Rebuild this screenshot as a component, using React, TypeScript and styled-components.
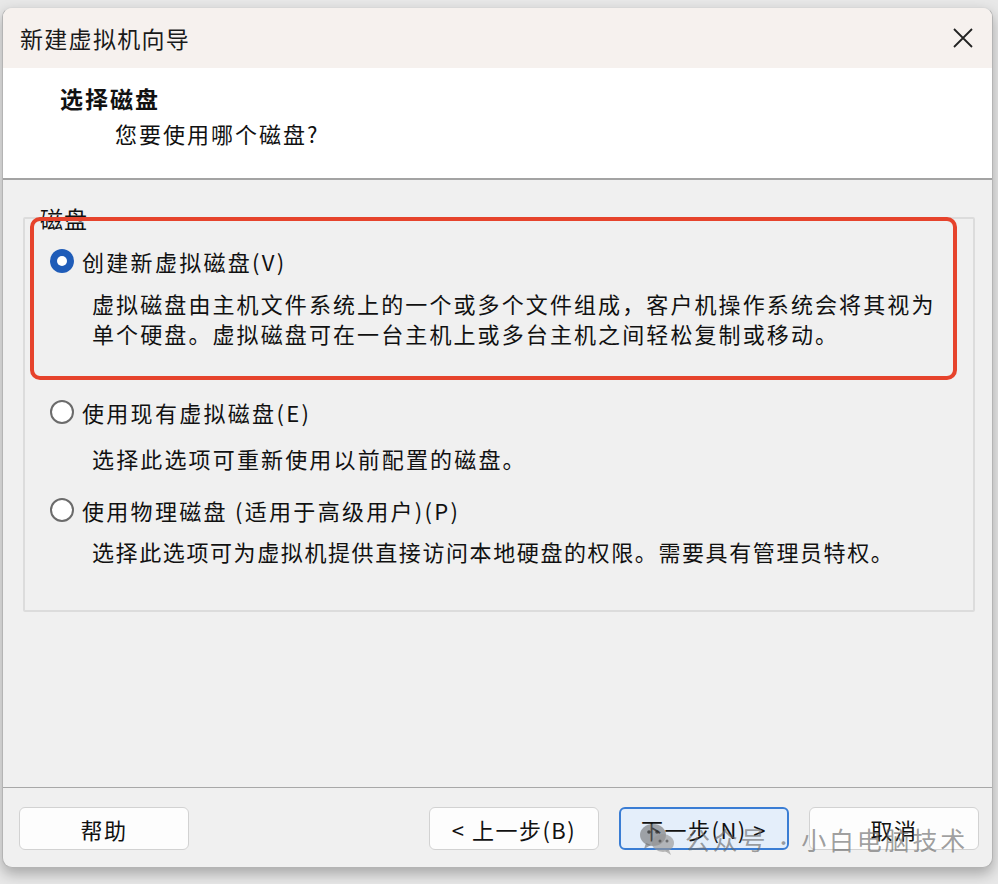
import React from 'react';
import styled, {createGlobalStyle} from 'styled-components';

const GlobalStyle = createGlobalStyle`
  html, body {
    margin: 0;
    padding: 0;
    background: #e8e8e8;
  }
  body {
    font-family: "Noto Sans CJK SC", "Noto Sans", sans-serif;
    color: #111;
  }
`;

const Page = styled.div`
  width: 998px;
  height: 884px;
  padding: 7px 0 0 2px;
  box-sizing: border-box;
  overflow: hidden;
`;

const Window = styled.div`
  width: 991px;
  height: 861px;
  box-sizing: border-box;
  border-radius: 10px;
  border: 1px solid #b4b4b4;
  border-top-color: #d8d8d8;
  overflow: hidden;
  display: flex;
  flex-direction: column;
  background: #f0f0f0;
  box-shadow: 0 6px 14px rgba(0, 0, 0, .28);
`;

const TitleBar = styled.div`
  height: 60px;
  flex: none;
  background: #f6f1ee;
  display: flex;
  align-items: center;
  justify-content: space-between;
  padding: 0 16px 0 17px;
`;

const Title = styled.span`
  font-size: 23px;
  letter-spacing: 1.3px;
  color: #1a1a1a;
`;

const CloseButton = styled.div`
  width: 26px;
  height: 26px;
  display: flex;
  align-items: center;
  justify-content: center;
`;

const Header = styled.div`
  height: 112px;
  flex: none;
  background: #ffffff;
  box-sizing: border-box;
  padding-top: 15px;
  border-bottom: 2px solid #a3a3a3;
`;

const Heading = styled.div`
  font-size: 23px;
  font-weight: 700;
  line-height: 30px;
  letter-spacing: 2px;
  padding-left: 57px;
`;

const SubHeading = styled.div`
  font-size: 22px;
  line-height: 30px;
  letter-spacing: 2px;
  margin-top: 5px;
  padding-left: 112px;
`;

const Body = styled.div`
  position: relative;
  height: 608px;
  flex: none;
  box-sizing: border-box;
  padding: 25px 17px 0 20px;
  border-bottom: 1px solid #a8a8a8;
`;

const GroupBox = styled.fieldset`
  margin: 0;
  padding: 0;
  height: 407px;
  box-sizing: border-box;
  border: 2px solid #dcdcdc;
  border-radius: 2px;
`;

const Legend = styled.legend`
  font-size: 23px;
  line-height: 26px;
  letter-spacing: 1px;
  margin-left: 15px;
  padding: 0;
`;

const Option = styled.div<{$top: number}>`
  margin-top: ${p => p.$top}px;
  padding-left: 25px;
`;

const OptionRow = styled.div`
  display: flex;
  align-items: center;
  gap: 8px;
  height: 30px;
`;

const Radio = styled.span<{$checked?: boolean}>`
  width: 24px;
  height: 24px;
  flex: none;
  box-sizing: border-box;
  border-radius: 50%;
  display: flex;
  align-items: center;
  justify-content: center;
  background: ${p => (p.$checked ? '#1f5cb8' : '#ffffff')};
  border: ${p => (p.$checked ? 'none' : '2px solid #6b6b6b')};

  &::after {
    content: '';
    display: ${p => (p.$checked ? 'block' : 'none')};
    width: 10px;
    height: 10px;
    border-radius: 50%;
    background: #ffffff;
  }
`;

const OptionLabel = styled.span`
  font-size: 22px;
  line-height: 30px;
  letter-spacing: 2.3px;
`;

const Description = styled.div<{$gap: number, $spacing: number}>`
  margin-top: ${p => p.$gap}px;
  padding-left: 42px;
  font-size: 22px;
  line-height: 30px;
  letter-spacing: ${p => p.$spacing}px;
`;

const Highlight = styled.div`
  position: absolute;
  left: 27px;
  top: 37px;
  width: 927px;
  height: 163px;
  box-sizing: border-box;
  border: 4px solid #e6432c;
  border-radius: 10px;
  pointer-events: none;
`;

const Footer = styled.div`
  position: relative;
  flex: 1;
  display: flex;
  align-items: flex-start;
  padding: 19px 13px 0 16px;
  gap: 20px;
`;

const Button = styled.button<{$primary?: boolean}>`
  width: 170px;
  height: 43px;
  box-sizing: border-box;
  border-radius: 6px;
  font-family: "Noto Sans CJK SC", "Noto Sans", sans-serif;
  font-size: 22px;
  color: #111;
  letter-spacing: 1.5px;
  background: ${p => (p.$primary ? '#e4eefa' : '#fdfdfd')};
  border: ${p => (p.$primary ? '2px solid #3a7dd4' : '1px solid #d2d2d2')};
  padding: 0;
`;

const Spacer = styled.div`
  flex: 1;
`;

const Watermark = styled.div`
  position: absolute;
  left: 636px;
  top: 33px;
  display: flex;
  align-items: center;
  gap: 10px;
  color: rgba(105, 105, 105, .65);
  font-size: 25px;
  letter-spacing: 2.8px;
  pointer-events: none;
`;

const Dot = styled.span`
  margin: 0 6px;
  font-size: 18px;
`;

function WeChatIcon() {
    return (
        <svg width="36" height="34" viewBox="0 0 36 34">
            <ellipse cx="14" cy="13" rx="13" ry="11" fill="rgba(110,110,110,.6)"/>
            <path d="M7 21 L5 27 L12 23 Z" fill="rgba(110,110,110,.6)"/>
            <ellipse cx="24" cy="21" rx="11" ry="9" fill="rgba(150,150,150,.65)"/>
            <path d="M30 28 L32 33 L26 29 Z" fill="rgba(150,150,150,.65)"/>
            <circle cx="10" cy="10" r="1.8" fill="rgba(40,40,40,.7)"/>
            <circle cx="18" cy="10" r="1.8" fill="rgba(40,40,40,.7)"/>
            <circle cx="21" cy="19" r="1.5" fill="rgba(60,60,60,.6)"/>
            <circle cx="28" cy="19" r="1.5" fill="rgba(60,60,60,.6)"/>
        </svg>
    );
}

export default function App() {
    return (
        <Page>
            <GlobalStyle/>
            <Window>
                <TitleBar>
                    <Title>新建虚拟机向导</Title>
                    <CloseButton>
                        <svg width="22" height="22" viewBox="0 0 22 22">
                            <path d="M2 2 L20 20 M20 2 L2 20" stroke="#222" strokeWidth="1.8"/>
                        </svg>
                    </CloseButton>
                </TitleBar>

                <Header>
                    <Heading>选择磁盘</Heading>
                    <SubHeading>您要使用哪个磁盘?</SubHeading>
                </Header>

                <Body>
                    <GroupBox>
                        <Legend>磁盘</Legend>

                        <Option $top={15}>
                            <OptionRow>
                                <Radio $checked/>
                                <OptionLabel>创建新虚拟磁盘(V)</OptionLabel>
                            </OptionRow>
                            <Description $gap={12} $spacing={2.1}>
                                虚拟磁盘由主机文件系统上的一个或多个文件组成，客户机操作系统会将其视为<br/>
                                单个硬盘。虚拟磁盘可在一台主机上或多台主机之间轻松复制或移动。
                            </Description>
                        </Option>

                        <Option $top={49}>
                            <OptionRow>
                                <Radio/>
                                <OptionLabel>使用现有虚拟磁盘(E)</OptionLabel>
                            </OptionRow>
                            <Description $gap={16} $spacing={2.15}>
                                选择此选项可重新使用以前配置的磁盘。
                            </Description>
                        </Option>

                        <Option $top={22}>
                            <OptionRow>
                                <Radio/>
                                <OptionLabel>使用物理磁盘 (适用于高级用户)(P)</OptionLabel>
                            </OptionRow>
                            <Description $gap={11} $spacing={1.6}>
                                选择此选项可为虚拟机提供直接访问本地硬盘的权限。需要具有管理员特权。
                            </Description>
                        </Option>
                    </GroupBox>

                    <Highlight/>
                </Body>

                <Footer>
                    <Button>帮助</Button>
                    <Spacer/>
                    <Button>&lt; 上一步(B)</Button>
                    <Button $primary>下一步(N) &gt;</Button>
                    <Button>取消</Button>

                    <Watermark>
                        <WeChatIcon/>
                        <span>公众号<Dot>·</Dot>小白电脑技术</span>
                    </Watermark>
                </Footer>
            </Window>
        </Page>
    );
}
